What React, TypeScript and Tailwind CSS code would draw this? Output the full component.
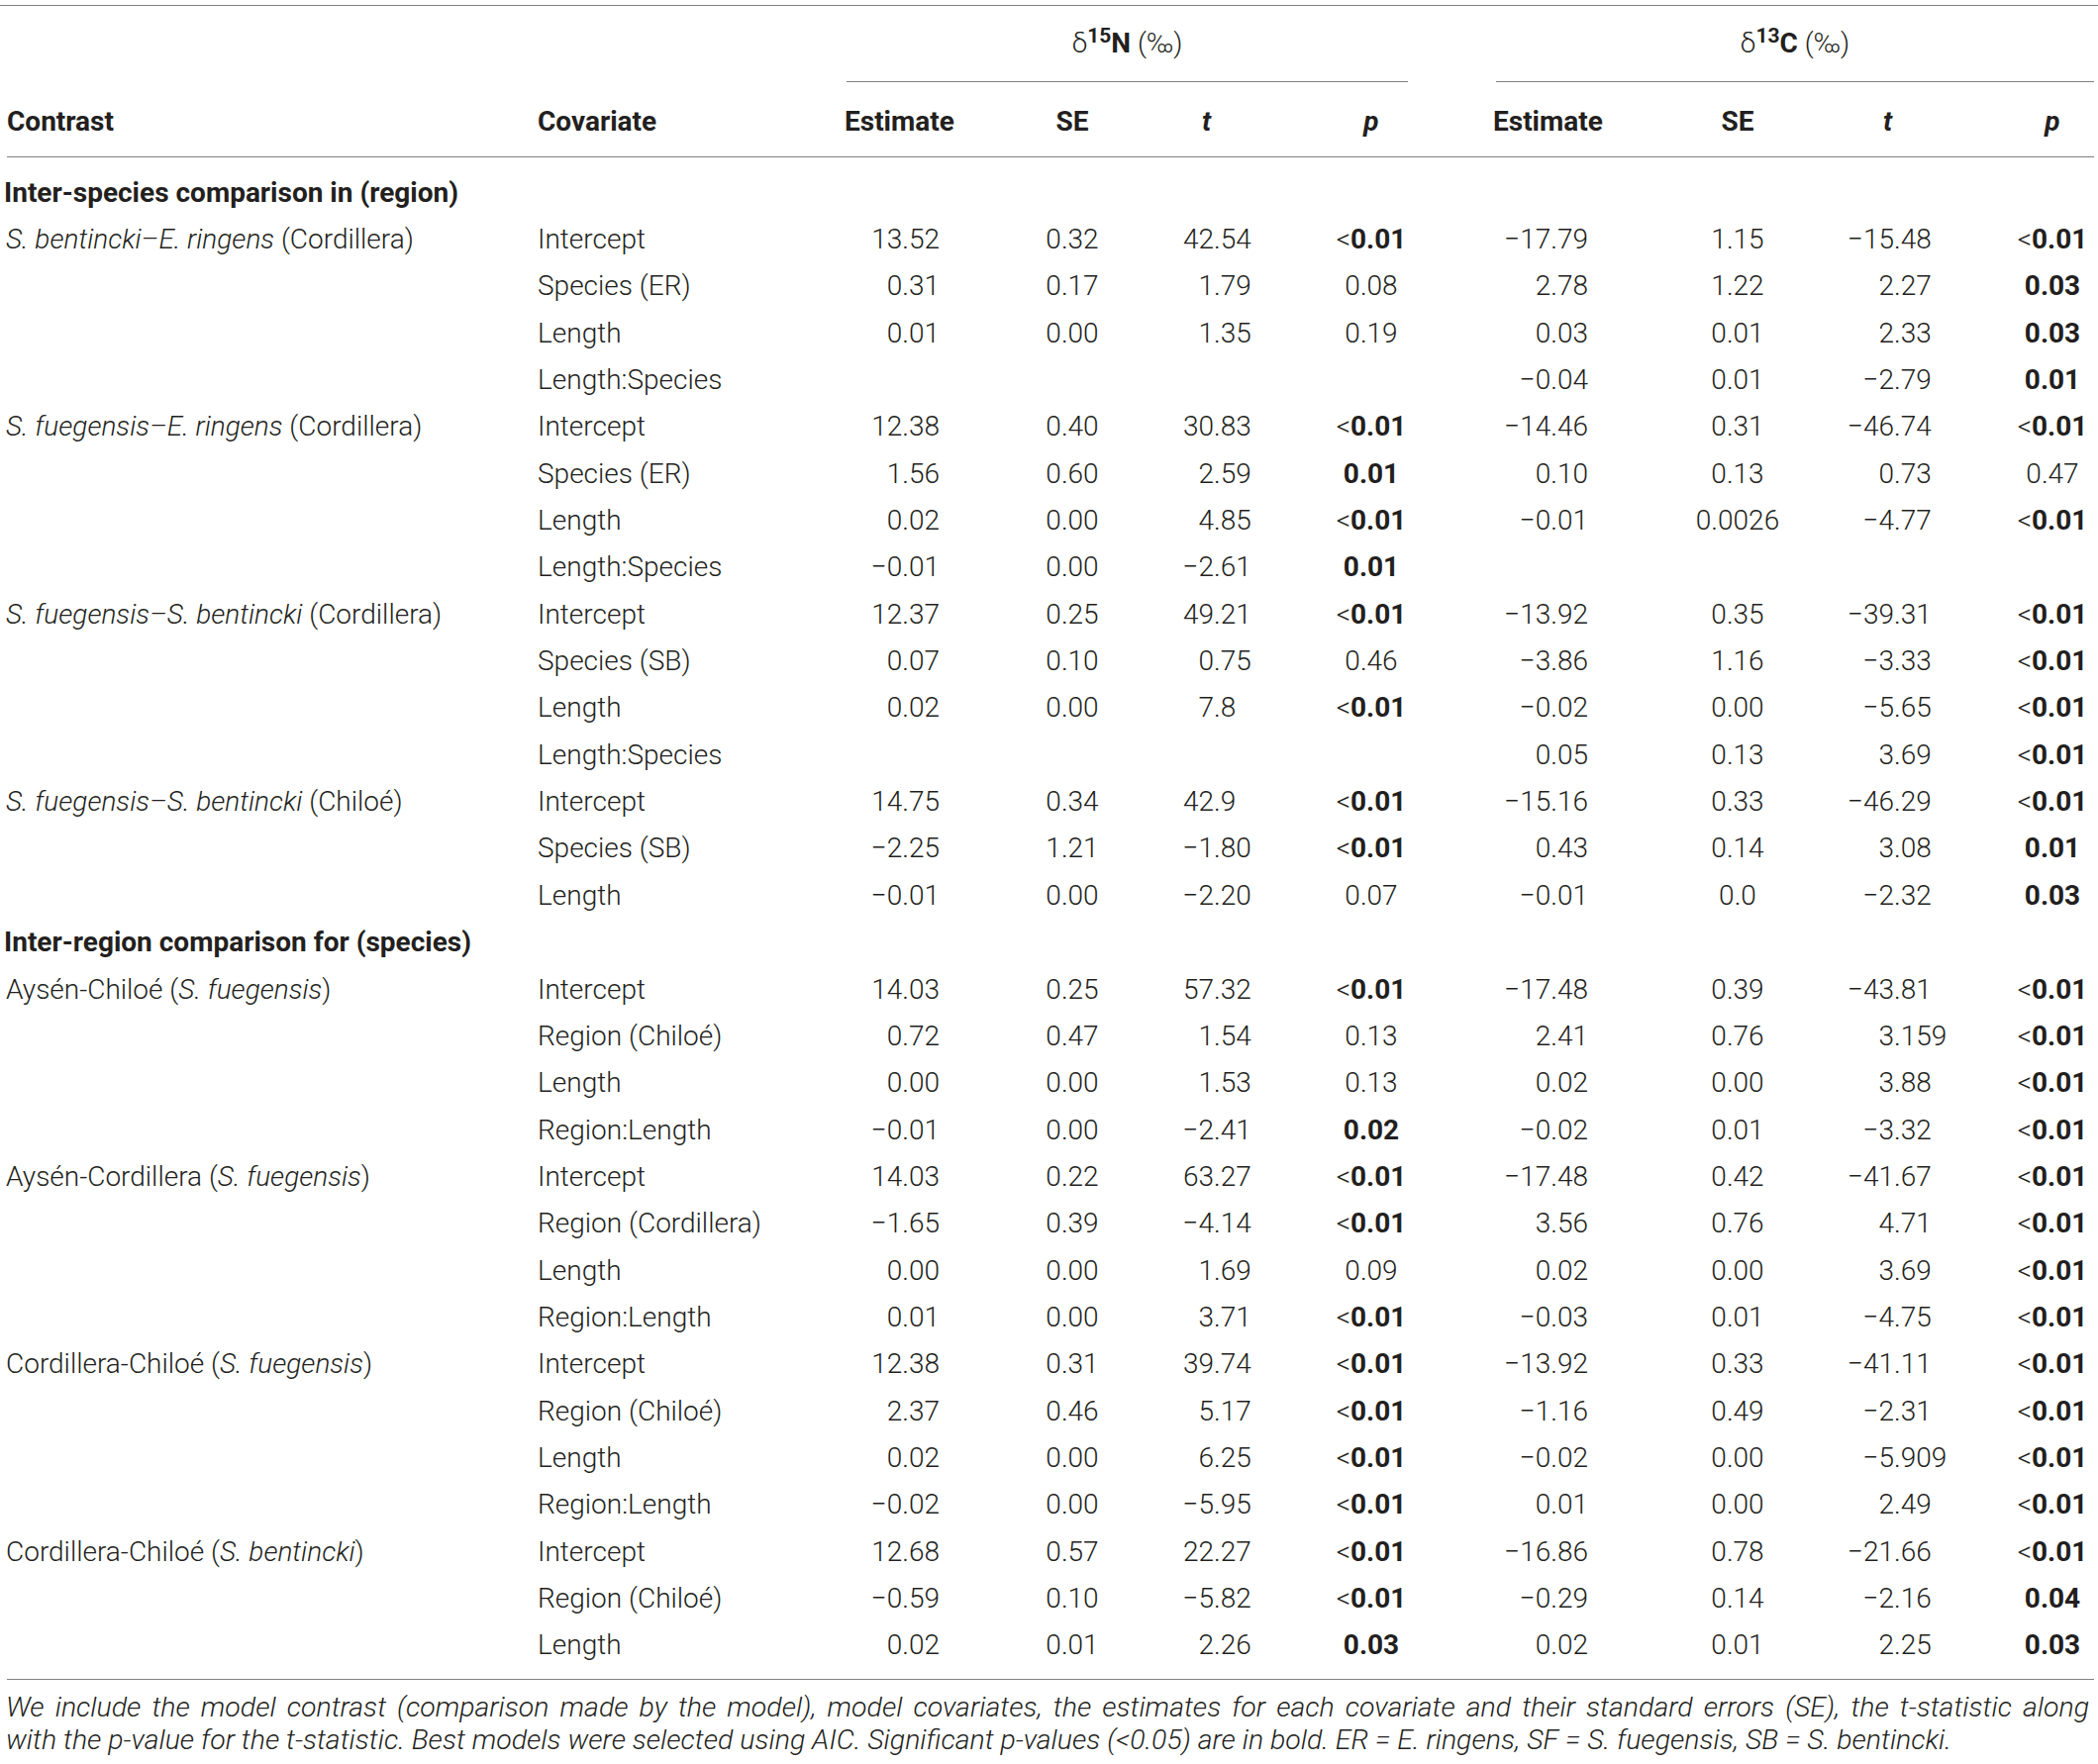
import React from "react";

type Quad = [string, string, string, string] | null;
type Row =
  | { kind: "section"; label: string }
  | { kind: "data"; contrast?: React.ReactNode; cov: string; n: Quad; c: Quad };

const COLS =
  "grid grid-cols-[540px_310px_170px_126px_154px_170px_190px_190px_177px_92px]";

const I = ({ children }: { children: React.ReactNode }) => (
  <span className="italic">{children}</span>
);

const rows: Row[] = [
  { kind: "section", label: "Inter-species comparison in (region)" },
  {
    kind: "data",
    contrast: (
      <>
        <I>S. bentincki–E. ringens</I> (Cordillera)
      </>
    ),
    cov: "Intercept",
    n: ["13.52", "0.32", "42.54", "<0.01"],
    c: ["−17.79", "1.15", "−15.48", "<0.01"],
  },
  { kind: "data", cov: "Species (ER)", n: ["0.31", "0.17", "1.79", "0.08"], c: ["2.78", "1.22", "2.27", "0.03"] },
  { kind: "data", cov: "Length", n: ["0.01", "0.00", "1.35", "0.19"], c: ["0.03", "0.01", "2.33", "0.03"] },
  { kind: "data", cov: "Length:Species", n: null, c: ["−0.04", "0.01", "−2.79", "0.01"] },
  {
    kind: "data",
    contrast: (
      <>
        <I>S. fuegensis–E. ringens</I> (Cordillera)
      </>
    ),
    cov: "Intercept",
    n: ["12.38", "0.40", "30.83", "<0.01"],
    c: ["−14.46", "0.31", "−46.74", "<0.01"],
  },
  { kind: "data", cov: "Species (ER)", n: ["1.56", "0.60", "2.59", "0.01"], c: ["0.10", "0.13", "0.73", "0.47"] },
  { kind: "data", cov: "Length", n: ["0.02", "0.00", "4.85", "<0.01"], c: ["−0.01", "0.0026", "−4.77", "<0.01"] },
  { kind: "data", cov: "Length:Species", n: ["−0.01", "0.00", "−2.61", "0.01"], c: null },
  {
    kind: "data",
    contrast: (
      <>
        <I>S. fuegensis–S. bentincki</I> (Cordillera)
      </>
    ),
    cov: "Intercept",
    n: ["12.37", "0.25", "49.21", "<0.01"],
    c: ["−13.92", "0.35", "−39.31", "<0.01"],
  },
  { kind: "data", cov: "Species (SB)", n: ["0.07", "0.10", "0.75", "0.46"], c: ["−3.86", "1.16", "−3.33", "<0.01"] },
  { kind: "data", cov: "Length", n: ["0.02", "0.00", "7.8", "<0.01"], c: ["−0.02", "0.00", "−5.65", "<0.01"] },
  { kind: "data", cov: "Length:Species", n: null, c: ["0.05", "0.13", "3.69", "<0.01"] },
  {
    kind: "data",
    contrast: (
      <>
        <I>S. fuegensis–S. bentincki</I> (Chiloé)
      </>
    ),
    cov: "Intercept",
    n: ["14.75", "0.34", "42.9", "<0.01"],
    c: ["−15.16", "0.33", "−46.29", "<0.01"],
  },
  { kind: "data", cov: "Species (SB)", n: ["−2.25", "1.21", "−1.80", "<0.01"], c: ["0.43", "0.14", "3.08", "0.01"] },
  { kind: "data", cov: "Length", n: ["−0.01", "0.00", "−2.20", "0.07"], c: ["−0.01", "0.0", "−2.32", "0.03"] },
  { kind: "section", label: "Inter-region comparison for (species)" },
  {
    kind: "data",
    contrast: (
      <>
        Aysén-Chiloé (<I>S. fuegensis</I>)
      </>
    ),
    cov: "Intercept",
    n: ["14.03", "0.25", "57.32", "<0.01"],
    c: ["−17.48", "0.39", "−43.81", "<0.01"],
  },
  { kind: "data", cov: "Region (Chiloé)", n: ["0.72", "0.47", "1.54", "0.13"], c: ["2.41", "0.76", "3.159", "<0.01"] },
  { kind: "data", cov: "Length", n: ["0.00", "0.00", "1.53", "0.13"], c: ["0.02", "0.00", "3.88", "<0.01"] },
  { kind: "data", cov: "Region:Length", n: ["−0.01", "0.00", "−2.41", "0.02"], c: ["−0.02", "0.01", "−3.32", "<0.01"] },
  {
    kind: "data",
    contrast: (
      <>
        Aysén-Cordillera (<I>S. fuegensis</I>)
      </>
    ),
    cov: "Intercept",
    n: ["14.03", "0.22", "63.27", "<0.01"],
    c: ["−17.48", "0.42", "−41.67", "<0.01"],
  },
  { kind: "data", cov: "Region (Cordillera)", n: ["−1.65", "0.39", "−4.14", "<0.01"], c: ["3.56", "0.76", "4.71", "<0.01"] },
  { kind: "data", cov: "Length", n: ["0.00", "0.00", "1.69", "0.09"], c: ["0.02", "0.00", "3.69", "<0.01"] },
  { kind: "data", cov: "Region:Length", n: ["0.01", "0.00", "3.71", "<0.01"], c: ["−0.03", "0.01", "−4.75", "<0.01"] },
  {
    kind: "data",
    contrast: (
      <>
        Cordillera-Chiloé (<I>S. fuegensis</I>)
      </>
    ),
    cov: "Intercept",
    n: ["12.38", "0.31", "39.74", "<0.01"],
    c: ["−13.92", "0.33", "−41.11", "<0.01"],
  },
  { kind: "data", cov: "Region (Chiloé)", n: ["2.37", "0.46", "5.17", "<0.01"], c: ["−1.16", "0.49", "−2.31", "<0.01"] },
  { kind: "data", cov: "Length", n: ["0.02", "0.00", "6.25", "<0.01"], c: ["−0.02", "0.00", "−5.909", "<0.01"] },
  { kind: "data", cov: "Region:Length", n: ["−0.02", "0.00", "−5.95", "<0.01"], c: ["0.01", "0.00", "2.49", "<0.01"] },
  {
    kind: "data",
    contrast: (
      <>
        Cordillera-Chiloé (<I>S. bentincki</I>)
      </>
    ),
    cov: "Intercept",
    n: ["12.68", "0.57", "22.27", "<0.01"],
    c: ["−16.86", "0.78", "−21.66", "<0.01"],
  },
  { kind: "data", cov: "Region (Chiloé)", n: ["−0.59", "0.10", "−5.82", "<0.01"], c: ["−0.29", "0.14", "−2.16", "0.04"] },
  { kind: "data", cov: "Length", n: ["0.02", "0.01", "2.26", "0.03"], c: ["0.02", "0.01", "2.25", "0.03"] },
];

function PVal({ v }: { v: string }) {
  if (v.startsWith("<")) {
    return (
      <span>
        &lt;<span className="font-bold">{v.slice(1)}</span>
      </span>
    );
  }
  const bold = parseFloat(v) < 0.05;
  return <span className={bold ? "font-bold" : ""}>{v}</span>;
}

function DecNumN({ v }: { v: string }) {
  const [a, b] = v.split(".");
  return (
    <div className="flex h-full items-center">
      <span className="w-[80px] text-right">{a}</span>
      <span className="w-[74px] text-left">.{b}</span>
    </div>
  );
}

function DecNumC({ v }: { v: string }) {
  const [a, b] = v.split(".");
  return (
    <div className="flex h-full items-center">
      <span className="w-[63px] text-right">{a}</span>
      <span className="w-[114px] text-left">.{b}</span>
    </div>
  );
}

function DataRow({ r }: { r: Extract<Row, { kind: "data" }> }) {
  const n = r.n;
  const c = r.c;
  return (
    <div className={`${COLS} h-[47.35px] whitespace-nowrap`}>
      <div className="flex h-full items-center pl-[6px]">
        <span>{r.contrast}</span>
      </div>
      <div className="flex h-full items-center pl-[3px]">
        <span>{r.cov}</span>
      </div>
      <div className="flex h-full items-center justify-end pr-[71px]">{n ? n[0] : ""}</div>
      <div className="flex h-full items-center justify-center">{n ? n[1] : ""}</div>
      <div>{n ? <DecNumN v={n[2]} /> : null}</div>
      <div className="flex h-full items-center justify-center">{n ? <PVal v={n[3]} /> : null}</div>
      <div className="flex h-full items-center justify-end pr-[56px]">{c ? c[0] : ""}</div>
      <div className="flex h-full items-center justify-center">{c ? c[1] : ""}</div>
      <div>{c ? <DecNumC v={c[2]} /> : null}</div>
      <div className="flex h-full items-center justify-center">{c ? <PVal v={c[3]} /> : null}</div>
    </div>
  );
}

export default function App() {
  return (
    <div className="w-[2119px] bg-white pb-[10px] font-['Roboto','Liberation_Sans',sans-serif] text-[28px] font-light leading-normal text-[#231f20]">
      {/* top rule */}
      <div className="pt-[5px]">
        <div className="h-px bg-[#808080]" />
      </div>

      {/* group header */}
      <div className={`${COLS} h-[77px]`}>
        <div className="col-span-2" />
        <div className="col-span-4 ml-[5px] mr-[48px] flex items-center justify-center border-b border-[#808080]">
          <span>
            δ<sup className="font-bold">15</sup>
            <span className="font-bold">N</span> (‰)
          </span>
        </div>
        <div className="col-span-4 ml-[41px] mr-[4px] flex items-center justify-center border-b border-[#808080]">
          <span>
            δ<sup className="font-bold">13</sup>
            <span className="font-bold">C</span> (‰)
          </span>
        </div>
      </div>

      {/* column headers */}
      <div className={`${COLS} h-[75px] pt-[5px] font-bold`}>
        <div className="flex items-center pl-[7px]">Contrast</div>
        <div className="flex items-center pl-[3px]">Covariate</div>
        <div className="flex items-center pl-[3px]">Estimate</div>
        <div className="flex items-center justify-center">SE</div>
        <div className="flex items-center pl-[68px] italic">t</div>
        <div className="flex items-center justify-center italic">p</div>
        <div className="flex items-center pl-[38px]">Estimate</div>
        <div className="flex items-center justify-center">SE</div>
        <div className="flex items-center pl-[52px] italic">t</div>
        <div className="flex items-center justify-center italic">p</div>
      </div>
      <div className="ml-[7px] mr-[4px] h-px bg-[#808080]" />

      <div className="h-[12px]" />

      {rows.map((r, i) =>
        r.kind === "section" ? (
          <div key={i} className="flex h-[47.35px] items-center whitespace-nowrap pl-[4px] font-bold">
            <span>{r.label}</span>
          </div>
        ) : (
          <DataRow key={i} r={r} />
        )
      )}

      <div className="h-[10px]" />
      <div className="ml-[7px] mr-[4px] h-px bg-[#808080]" />

      {/* footnote */}
      <div className="pl-[6px] pr-[9px] pt-[11px] text-[28.5px] italic leading-[33px]">
        <div className="text-justify [text-align-last:justify]">
          We include the model contrast (comparison made by the model), model covariates, the estimates for each
          covariate and their standard errors (SE), the t-statistic along
        </div>
        <div>
          with the p-value for the t-statistic. Best models were selected using AIC. Significant p-values (&lt;0.05) are
          in bold. ER = E. ringens, SF = S. fuegensis, SB = S. bentincki.
        </div>
      </div>
    </div>
  );
}
